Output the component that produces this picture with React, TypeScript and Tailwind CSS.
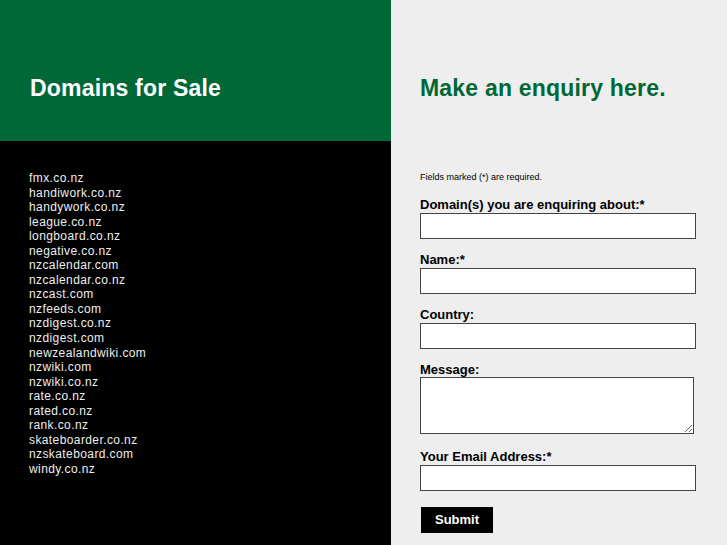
const domains = [
  "fmx.co.nz",
  "handiwork.co.nz",
  "handywork.co.nz",
  "league.co.nz",
  "longboard.co.nz",
  "negative.co.nz",
  "nzcalendar.com",
  "nzcalendar.co.nz",
  "nzcast.com",
  "nzfeeds.com",
  "nzdigest.co.nz",
  "nzdigest.com",
  "newzealandwiki.com",
  "nzwiki.com",
  "nzwiki.co.nz",
  "rate.co.nz",
  "rated.co.nz",
  "rank.co.nz",
  "skateboarder.co.nz",
  "nzskateboard.com",
  "windy.co.nz",
];

function Field({ label, tall }: { label: string; tall?: boolean }) {
  return (
    <div className={tall ? "mb-[15px]" : "mb-[13px]"}>
      <label className="block h-4 text-[13px] font-bold leading-4 text-black">{label}</label>
      {tall ? (
        <textarea className="-mt-px block h-[57px] w-[274px] border border-[#444] bg-white" />
      ) : (
        <input className="block h-[26px] w-[276px] border border-[#444] bg-white" />
      )}
    </div>
  );
}

export default function App() {
  return (
    <div className="flex h-[545px] w-[727px] font-['Liberation_Sans',Arial,sans-serif]">
      <div className="flex w-[391px] flex-col bg-black">
        <div className="h-[141px] bg-[#006837] px-[30px] pt-[74px]">
          <h1 className="text-[23px] font-bold leading-[28px] tracking-[0.2px] text-white">Domains for Sale</h1>
        </div>
        <ul className="px-[29px] pt-[30px] text-[12px] leading-[14.55px] tracking-[0.4px] text-[#eeeeee]">
          {domains.map((d) => (
            <li key={d}>{d}</li>
          ))}
        </ul>
      </div>
      <div className="flex flex-1 flex-col bg-[#eeeeee]">
        <div className="h-[141px] px-[29px] pt-[74px]">
          <h2 className="text-[23px] font-bold leading-[28px] tracking-[0.2px] text-[#006837]">Make an enquiry here.</h2>
        </div>
        <div className="px-[29px] pt-[30px]">
          <p className="mb-[14px] h-3 text-[9px] leading-3 text-black">Fields marked (*) are required.</p>
          <Field label="Domain(s) you are enquiring about:*" />
          <Field label="Name:*" />
          <Field label="Country:" />
          <Field label="Message:" tall />
          <Field label="Your Email Address:*" />
          <button className="ml-px mt-[3px] h-[26px] w-[72px] bg-black text-[13px] font-bold text-white">Submit</button>
        </div>
      </div>
    </div>
  );
}
